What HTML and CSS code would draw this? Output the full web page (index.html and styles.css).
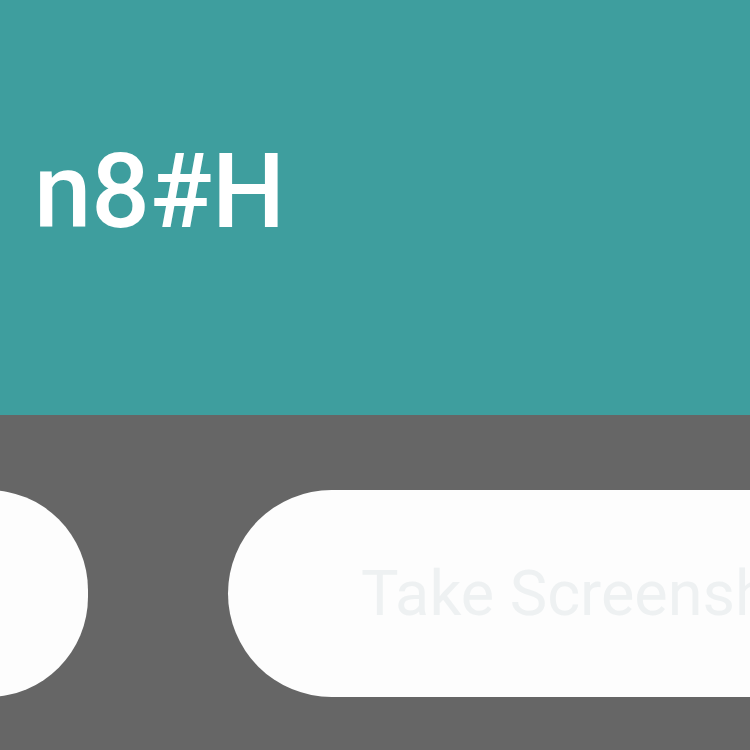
FILE: index.html
```html
<!DOCTYPE html>
<html>
<head>
<meta charset="utf-8">
<link rel="stylesheet" href="styles.css">
</head>
<body>
<div class="screen">
  <section class="header">
    <h1 class="code">n8#H</h1>
  </section>
  <section class="actions">
    <div class="pill pill-left"></div>
    <div class="pill pill-main"><span class="label">Take Screenshot</span></div>
  </section>
</div>
</body>
</html>
```
FILE: styles.css
```css
html, body {
  margin: 0;
  padding: 0;
  width: 750px;
  height: 750px;
  overflow: hidden;
  background: #666666;
}
.screen {
  width: 750px;
  height: 750px;
  display: flex;
  flex-direction: column;
  overflow: hidden;
}
.header {
  background: #3e9e9e;
  height: 415px;
  flex: none;
  padding: 140px 0 0 34px;
  box-sizing: border-box;
}
.code {
  margin: 0;
  font-family: Roboto, "Liberation Sans", sans-serif;
  font-weight: 500;
  font-size: 103px;
  line-height: 1;
  color: #ffffff;
}
.actions {
  flex: 1;
  background: #666666;
  display: flex;
  align-items: flex-start;
  gap: 140px;
  padding-top: 75px;
  margin-left: -112px;
}
.pill {
  flex: none;
  height: 207px;
  border-radius: 104px;
  background: #fdfdfd;
}
.pill-left {
  width: 200px;
}
.pill-main {
  width: 700px;
  display: flex;
  align-items: center;
  padding-left: 133px;
  box-sizing: border-box;
}
.label {
  font-family: Roboto, "Liberation Sans", sans-serif;
  font-size: 63px;
  line-height: 1;
  color: #eef1f2;
  white-space: nowrap;
}
```
